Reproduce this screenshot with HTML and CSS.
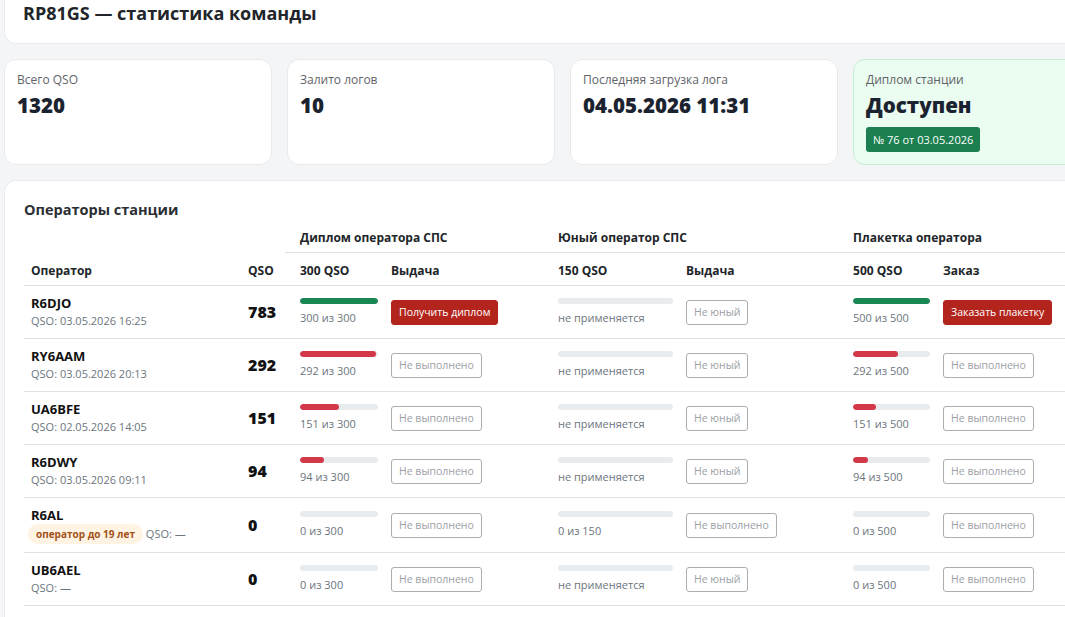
FILE: index.html
```html
<!DOCTYPE html>
<html lang="ru">
<head>
    <meta charset="UTF-8" />
    <meta name="viewport" content="width=device-width, initial-scale=1.0" />
    <title>RP81GS — статистика команды</title>
    <link rel="stylesheet" href="styles.css">
</head>
<body>
<div class="page">
    <div class="card head-card">
        <h1>RP81GS — статистика команды</h1>
    </div>

    <div class="stats">
        <div class="stat">
            <div class="stat-label">Всего QSO</div>
            <div class="stat-value">1320</div>
        </div>
        <div class="stat">
            <div class="stat-label">Залито логов</div>
            <div class="stat-value">10</div>
        </div>
        <div class="stat">
            <div class="stat-label">Последняя загрузка лога</div>
            <div class="stat-value">04.05.2026 11:31</div>
        </div>
        <div class="stat stat-ok">
            <div class="stat-label">Диплом станции</div>
            <div class="stat-value">Доступен</div>
            <span class="badge-green">№ 76 от 03.05.2026</span>
        </div>
    </div>

    <div class="card ops-card">
        <h2>Операторы станции</h2>
        <table class="ops">
            <colgroup>
                <col style="width:217px">
                <col style="width:44px">
                <col style="width:99px">
                <col style="width:159px">
                <col style="width:136px">
                <col style="width:159px">
                <col style="width:98px">
                <col style="width:167px">
            </colgroup>
            <thead>
                <tr class="groups">
                    <th colspan="2" class="blank"></th>
                    <th colspan="2" class="gs">Диплом оператора СПС</th>
                    <th colspan="2" class="gs">Юный оператор СПС</th>
                    <th colspan="2" class="gs">Плакетка оператора</th>
                </tr>
                <tr class="cols">
                    <th>Оператор</th>
                    <th>QSO</th>
                    <th class="gs">300 QSO</th>
                    <th>Выдача</th>
                    <th class="gs">150 QSO</th>
                    <th>Выдача</th>
                    <th class="gs">500 QSO</th>
                    <th>Заказ</th>
                </tr>
            </thead>
            <tbody>
                <tr>
                    <td><div class="call">R6DJO</div><div class="sub">QSO: 03.05.2026 16:25</div></td>
                    <td class="qso">783</td>
                    <td class="gs"><div class="bar bar-w1"><div class="fill green" style="width:100%"></div></div><div class="sub">300 из 300</div></td>
                    <td><button class="btn-red">Получить диплом</button></td>
                    <td class="gs"><div class="bar bar-w2"></div><div class="sub">не применяется</div></td>
                    <td><button class="btn-off">Не юный</button></td>
                    <td class="gs"><div class="bar bar-w3"><div class="fill green" style="width:100%"></div></div><div class="sub">500 из 500</div></td>
                    <td><button class="btn-red">Заказать плакетку</button></td>
                </tr>
                <tr>
                    <td><div class="call">RY6AAM</div><div class="sub">QSO: 03.05.2026 20:13</div></td>
                    <td class="qso">292</td>
                    <td class="gs"><div class="bar bar-w1"><div class="fill red" style="width:97%"></div></div><div class="sub">292 из 300</div></td>
                    <td><button class="btn-off">Не выполнено</button></td>
                    <td class="gs"><div class="bar bar-w2"></div><div class="sub">не применяется</div></td>
                    <td><button class="btn-off">Не юный</button></td>
                    <td class="gs"><div class="bar bar-w3"><div class="fill red" style="width:58%"></div></div><div class="sub">292 из 500</div></td>
                    <td><button class="btn-off">Не выполнено</button></td>
                </tr>
                <tr>
                    <td><div class="call">UA6BFE</div><div class="sub">QSO: 02.05.2026 14:05</div></td>
                    <td class="qso">151</td>
                    <td class="gs"><div class="bar bar-w1"><div class="fill red" style="width:50%"></div></div><div class="sub">151 из 300</div></td>
                    <td><button class="btn-off">Не выполнено</button></td>
                    <td class="gs"><div class="bar bar-w2"></div><div class="sub">не применяется</div></td>
                    <td><button class="btn-off">Не юный</button></td>
                    <td class="gs"><div class="bar bar-w3"><div class="fill red" style="width:30%"></div></div><div class="sub">151 из 500</div></td>
                    <td><button class="btn-off">Не выполнено</button></td>
                </tr>
                <tr>
                    <td><div class="call">R6DWY</div><div class="sub">QSO: 03.05.2026 09:11</div></td>
                    <td class="qso">94</td>
                    <td class="gs"><div class="bar bar-w1"><div class="fill red" style="width:31%"></div></div><div class="sub">94 из 300</div></td>
                    <td><button class="btn-off">Не выполнено</button></td>
                    <td class="gs"><div class="bar bar-w2"></div><div class="sub">не применяется</div></td>
                    <td><button class="btn-off">Не юный</button></td>
                    <td class="gs"><div class="bar bar-w3"><div class="fill red" style="width:19%"></div></div><div class="sub">94 из 500</div></td>
                    <td><button class="btn-off">Не выполнено</button></td>
                </tr>
                <tr>
                    <td><div class="call">R6AL</div><div class="sub"><span class="young">оператор до 19 лет</span> QSO: —</div></td>
                    <td class="qso">0</td>
                    <td class="gs"><div class="bar bar-w1"></div><div class="sub">0 из 300</div></td>
                    <td><button class="btn-off">Не выполнено</button></td>
                    <td class="gs"><div class="bar bar-w2"></div><div class="sub">0 из 150</div></td>
                    <td><button class="btn-off">Не выполнено</button></td>
                    <td class="gs"><div class="bar bar-w3"></div><div class="sub">0 из 500</div></td>
                    <td><button class="btn-off">Не выполнено</button></td>
                </tr>
                <tr>
                    <td><div class="call">UB6AEL</div><div class="sub">QSO: —</div></td>
                    <td class="qso">0</td>
                    <td class="gs"><div class="bar bar-w1"></div><div class="sub">0 из 300</div></td>
                    <td><button class="btn-off">Не выполнено</button></td>
                    <td class="gs"><div class="bar bar-w2"></div><div class="sub">не применяется</div></td>
                    <td><button class="btn-off">Не юный</button></td>
                    <td class="gs"><div class="bar bar-w3"></div><div class="sub">0 из 500</div></td>
                    <td><button class="btn-off">Не выполнено</button></td>
                </tr>
            </tbody>
        </table>
    </div>
</div>
</body>
</html>
```

FILE: styles.css
```css
html, body {
    margin: 0;
    overflow: hidden;
}

body {
    font-family: "Segoe UI", "Open Sans", "Noto Sans", sans-serif;
    background-color: #f4f5f7;
    color: #1f2328;
}

/* страница прокручена чуть вниз */
.page {
    width: 1117px;
    padding: 0 4px;
    margin-top: -19px;
    display: flex;
    flex-direction: column;
    gap: 15px;
}

.card {
    background: #fff;
    border: 1px solid #e7e9ec;
    border-radius: 12px;
}

.head-card {
    padding: 18px 18px 17px;
}

h1 {
    margin: 0;
    font-size: 18px;
    line-height: 26px;
    font-weight: 700;
    color: #212529;
}

.stats {
    display: grid;
    grid-template-columns: repeat(4, 1fr);
    gap: 15px;
}

.stat {
    background: #fff;
    border: 1px solid #e7e9ec;
    border-radius: 12px;
    padding: 11px 12px 12px;
}

.stat-label {
    font-size: 12px;
    line-height: 17px;
    color: #5f6368;
}

.stat-value {
    font-size: 20.5px;
    line-height: 28px;
    font-weight: 800;
    color: #1c2330;
    margin-top: 3px;
}

.stat-ok {
    background: #ebfcf1;
    border-color: #c6eed3;
}

.badge-green {
    display: inline-block;
    margin-top: 8px;
    background: #1b7f4f;
    color: #fff;
    font-size: 11px;
    line-height: 25px;
    padding: 0 7px;
    border-radius: 3px;
}

.ops-card {
    padding: 18px 19px 30px;
}

h2 {
    margin: 0;
    font-size: 14.5px;
    line-height: 22px;
    font-weight: 700;
    color: #2b2f33;
}

.ops {
    border-collapse: collapse;
    table-layout: fixed;
    width: 1079px;
}

.ops th {
    text-align: left;
    font-size: 12px;
    font-weight: 700;
    color: #212529;
    line-height: 18px;
    border-bottom: 1px solid #dee2e6;
}

.ops tr.groups th {
    padding: 8px 7px 5px;
}

.ops tr.cols th {
    padding: 9px 7px 5px;
}

.ops th.blank {
    border-bottom: none;
}

.ops td {
    padding: 8px 7px;
    vertical-align: middle;
    border-bottom: 1px solid #dee2e6;
    font-size: 12px;
}

.ops .gs,
.ops tr.groups th.gs,
.ops tr.cols th.gs {
    padding-left: 15px;
}

.call {
    font-size: 13px;
    font-weight: 700;
    line-height: 18px;
    color: #111;
}

.sub {
    font-size: 11px;
    line-height: 18px;
    color: #6c757d;
}

.ops td.qso {
    font-size: 16px;
    font-weight: 800;
    color: #111;
}

.bar {
    height: 6px;
    border-radius: 3px;
    background: #e9ecef;
    overflow: hidden;
    margin-bottom: 5px;
}

.bar-w1 { width: 78px; }
.bar-w2 { width: 115px; }
.bar-w3 { width: 77px; }

.fill {
    height: 100%;
    border-radius: 3px;
}

.fill.green { background: #198754; }
.fill.red { background: #d33848; }

button {
    font-family: inherit;
    font-size: 10.5px;
    line-height: 15px;
    padding: 4px 7px;
    border-radius: 3px;
    cursor: pointer;
}

.btn-red {
    background: #b3241c;
    color: #fff;
    border: 1px solid #b3241c;
}

.btn-off {
    background: #fff;
    color: #9ca1a6;
    border: 1px solid #a9aeb3;
}

.young {
    display: inline-block;
    margin-left: -3px;
    background: #fff4e3;
    color: #a2521a;
    font-weight: 700;
    font-size: 10px;
    line-height: 20px;
    padding: 0 8px;
    border-radius: 10px;
}
```
